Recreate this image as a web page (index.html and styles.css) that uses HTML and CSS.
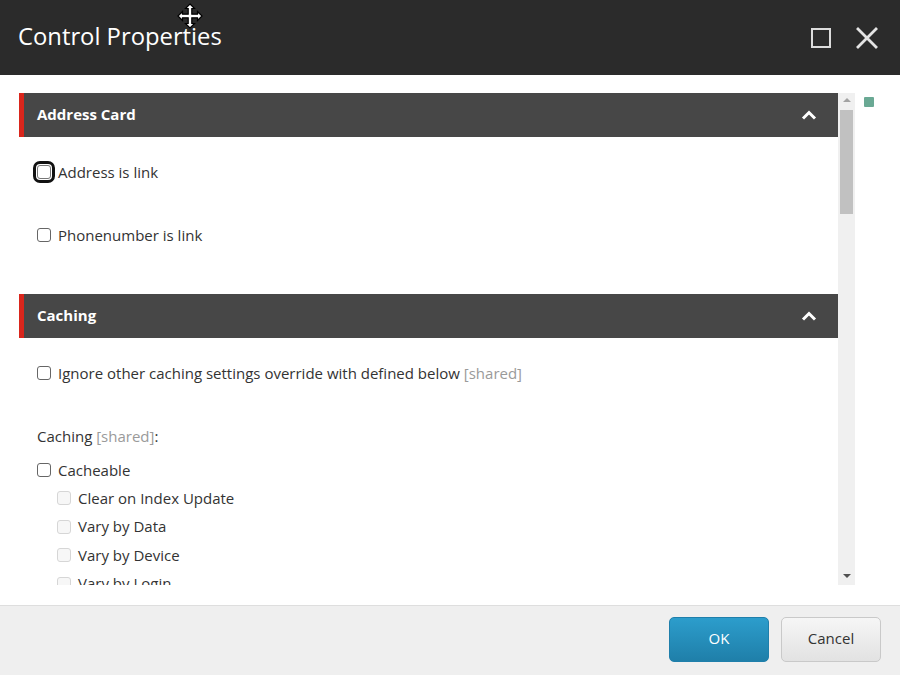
FILE: index.html
```html
<!DOCTYPE html>
<html>
<head>
<meta charset="utf-8">
<link rel="stylesheet" href="styles.css">
</head>
<body>
<div class="dialog">
  <header class="titlebar">
    <h1 class="title">Control Properties</h1>
    <div class="win-actions">
      <svg class="icon" width="20" height="20" viewBox="0 0 20 20"><rect x="1" y="1" width="18" height="18" fill="none" stroke="#dcdcdc" stroke-width="2"/></svg>
      <svg class="icon" width="22" height="22" viewBox="0 0 22 22"><path d="M2 2 L20 20 M20 2 L2 20" stroke="#e4e4e4" stroke-width="2.8" stroke-linecap="square"/></svg>
    </div>
    <svg class="cursor" width="26" height="26" viewBox="0 0 26 26"><path d="M13 1 L17.5 5.5 L14.8 5.5 L14.8 11.2 L20.5 11.2 L20.5 8.5 L25 13 L20.5 17.5 L20.5 14.8 L14.8 14.8 L14.8 20.5 L17.5 20.5 L13 25 L8.5 20.5 L11.2 20.5 L11.2 14.8 L5.5 14.8 L5.5 17.5 L1 13 L5.5 8.5 L5.5 11.2 L11.2 11.2 L11.2 5.5 L8.5 5.5 Z" fill="#fff" stroke="#000" stroke-width="1.2" stroke-linejoin="miter"/></svg>
  </header>
  <main class="body">
    <div class="scroller">
      <div class="content">
        <section class="section">
          <div class="section-head">
            <span>Address Card</span>
            <svg width="16" height="10" viewBox="0 0 16 10"><path d="M2 8.5 L8 2.5 L14 8.5" fill="none" stroke="#fff" stroke-width="3"/></svg>
          </div>
          <div class="section-body sb-address">
            <label class="row"><input type="checkbox" class="cb focused"><span class="lbl">Address is link</span></label>
            <label class="row gap-lg"><input type="checkbox" class="cb"><span class="lbl">Phonenumber is link</span></label>
          </div>
        </section>
        <section class="section">
          <div class="section-head">
            <span>Caching</span>
            <svg width="16" height="10" viewBox="0 0 16 10"><path d="M2 8.5 L8 2.5 L14 8.5" fill="none" stroke="#fff" stroke-width="3"/></svg>
          </div>
          <div class="section-body sb-caching">
            <label class="row"><input type="checkbox" class="cb"><span class="lbl">Ignore other caching settings override with defined below <span class="muted">[shared]</span></span></label>
            <div class="row plain gap-md">Caching&nbsp;<span class="muted">[shared]</span>:</div>
            <label class="row gap-sm"><input type="checkbox" class="cb"><span class="lbl">Cacheable</span></label>
            <div class="nested">
              <label class="row"><input type="checkbox" class="cb" disabled><span class="lbl">Clear on Index Update</span></label>
              <label class="row"><input type="checkbox" class="cb" disabled><span class="lbl">Vary by Data</span></label>
              <label class="row"><input type="checkbox" class="cb" disabled><span class="lbl">Vary by Device</span></label>
              <label class="row"><input type="checkbox" class="cb" disabled><span class="lbl">Vary by Login</span></label>
            </div>
          </div>
        </section>
      </div>
      <div class="scrollbar">
        <div class="arrow up"></div>
        <div class="thumb"></div>
        <div class="track-rest"></div>
        <div class="arrow down"></div>
      </div>
    </div>
    <div class="marker"></div>
  </main>
  <footer class="footer">
    <button class="btn primary">OK</button>
    <button class="btn">Cancel</button>
  </footer>
</div>
</body>
</html>
```

FILE: styles.css
```css
* { box-sizing: border-box; }
html, body { margin: 0; padding: 0; }
body {
  width: 900px;
  height: 675px;
  overflow: hidden;
  font-family: "Open Sans", "Noto Sans", sans-serif;
  background: #fff;
  color: #333;
}
.dialog {
  display: flex;
  flex-direction: column;
  height: 675px;
}
.titlebar {
  position: relative;
  height: 75px;
  background: #2b2b2b;
  display: flex;
  align-items: center;
  justify-content: space-between;
  padding: 0 22px 0 19px;
  flex: none;
}
.title {
  margin: 0;
  font-weight: 400;
  font-size: 23.8px;
  color: #fff;
  padding-bottom: 4px;
  margin-left: -1px;
}
.win-actions {
  display: flex;
  align-items: center;
  gap: 25px;
}
.cursor {
  position: absolute;
  left: 177px;
  top: 3px;
}
.body {
  flex: 1;
  display: flex;
  align-items: flex-start;
  padding: 18px 0 0 19px;
}
.scroller {
  display: flex;
  height: 492px;
  width: 836px;
}
.content {
  width: 819px;
  height: 492px;
  overflow: hidden;
}
.section-head {
  height: 44px;
  background: #474747;
  border-left: 5px solid #d9261c;
  display: flex;
  align-items: center;
  justify-content: space-between;
  padding: 0 21px 0 13px;
  color: #fff;
  font-weight: 700;
  font-size: 15px;
}
.section-head span { padding-bottom: 3px; }
.sb-address { padding: 21px 0 45px 18px; }
.sb-caching { padding: 21px 0 0 18px; }
.row {
  display: flex;
  align-items: center;
  height: 28px;
  font-size: 15px;
  color: #333;
}
.gap-lg { margin-top: 35px; }
.gap-md { margin-top: 35px; }
.gap-sm { margin-top: 6px; }
.plain { padding-bottom: 0; }
.muted { color: #9a9a9a; }
.nested { padding-left: 20px; }
.nested .row { height: 28.5px; }
.cb {
  appearance: none;
  -webkit-appearance: none;
  width: 14px;
  height: 14px;
  margin: 0 7px 0 0;
  border: 1px solid #666;
  border-radius: 3px;
  background: #fff;
  flex: none;
}
.cb.focused {
  outline: 3px solid #111;
  outline-offset: 1px;
  border-color: #777;
}
.cb:disabled {
  border-color: #d6d6d6;
  background: #f7f7f7;
}
.lbl { padding-bottom: 1px; }
.scrollbar {
  width: 17px;
  height: 492px;
  background: #f0f0f0;
  display: flex;
  flex-direction: column;
  align-items: center;
}
.arrow {
  width: 17px;
  height: 17px;
  position: relative;
  flex: none;
}
.arrow.up::after, .arrow.down::after {
  content: "";
  position: absolute;
  left: 5px;
  border-left: 4px solid transparent;
  border-right: 4px solid transparent;
}
.arrow.up::after { top: 5px; border-bottom: 4px solid #a3a3a3; }
.arrow.down::after { top: 6px; border-top: 4px solid #505050; }
.thumb {
  width: 13px;
  height: 104px;
  background: #c1c1c1;
  flex: none;
}
.track-rest { flex: 1; }
.marker {
  width: 10px;
  height: 10px;
  background: #6aa994;
  margin: 4px 0 0 9px;
  border-radius: 1px;
}
.footer {
  height: 70px;
  flex: none;
  background: #efefef;
  border-top: 1px solid #dedede;
  display: flex;
  justify-content: flex-end;
  align-items: center;
  gap: 12px;
  padding: 0 19px 2px 0;
}
.btn {
  width: 100px;
  height: 45px;
  font-family: "Open Sans", "Noto Sans", sans-serif;
  font-size: 15px;
  border-radius: 5px;
  border: 1px solid #c9c9c9;
  background: linear-gradient(#f6f6f6, #e2e2e2);
  color: #333;
  padding: 0 0 4px;
}
.btn.primary {
  border: 1px solid #1f7fab;
  background: linear-gradient(#2c9dcc, #1f7fa9);
  color: #fff;
}
```
